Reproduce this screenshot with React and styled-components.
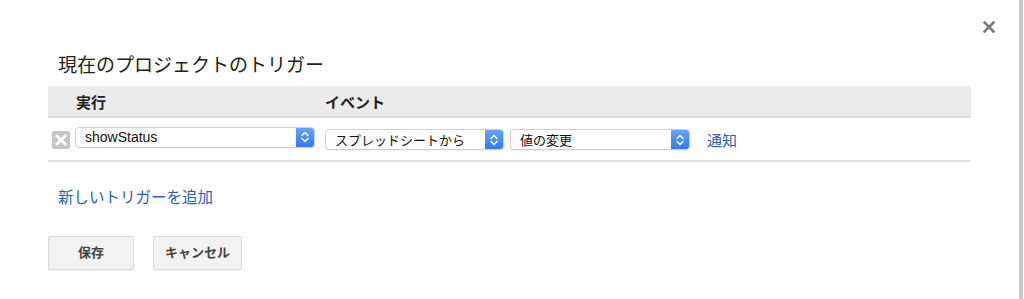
import React from 'react';
import styled, { createGlobalStyle } from 'styled-components';

const GlobalStyle = createGlobalStyle`
  html, body {
    margin: 0;
    padding: 0;
    background: #fff;
    font-family: "Liberation Sans", "Noto Sans CJK JP", sans-serif;
  }
`;

const jp = `"Noto Sans CJK JP", "Liberation Sans", sans-serif`;

const Page = styled.div`
  display: flex;
  height: 299px;
  overflow: hidden;
`;

const Dialog = styled.div`
  flex: 1;
  display: flex;
  flex-direction: column;
`;

const ScrollEdge = styled.div`
  width: 4px;
  margin-right: 1px;
  background: #c9c9c9;
`;

const CloseBar = styled.div`
  height: 53px;
  box-sizing: border-box;
  padding: 21px 24px 0 0;
  display: flex;
  justify-content: flex-end;
  align-items: flex-start;
`;

const Body = styled.div`
  padding: 0 48px;
`;

const Title = styled.h2`
  margin: 0;
  padding-left: 10px;
  height: 22px;
  line-height: 22px;
  font-family: ${jp};
  font-size: 19px;
  font-weight: 400;
  color: #222;
`;

const HeaderRow = styled.div`
  margin-top: 11px;
  height: 30px;
  display: flex;
  align-items: center;
  background: #ebebeb;
  border-bottom: 2px solid #dcdcdc;
`;

const HeaderCell = styled.div`
  width: ${p => p.width || 'auto'};
  padding-left: ${p => p.indent || 0}px;
  box-sizing: border-box;
  font-family: ${jp};
  font-size: 15px;
  font-weight: 700;
  color: #222;
`;

const TriggerRow = styled.div`
  height: 42px;
  display: flex;
  align-items: center;
  padding-left: 4px;
  border-bottom: 2px solid #e0e0e0;
`;

const RemoveBox = styled.div`
  width: 18px;
  height: 18px;
  border-radius: 2px;
  background: #c6c6c6;
  display: flex;
  align-items: center;
  justify-content: center;
  margin-top: 1px;
`;

const Select = styled.div`
  width: ${p => p.width}px;
  height: 21px;
  margin-left: ${p => p.gap}px;
  margin-top: ${p => p.shift || 0}px;
  box-sizing: border-box;
  display: flex;
  border: 1px solid #cfcfcf;
  border-radius: 4px;
  background: #fff;
  box-shadow: 0 1px 1px rgba(0, 0, 0, 0.06);
  overflow: hidden;
`;

const SelectText = styled.div`
  flex: 1;
  padding-left: ${p => p.pad || 9}px;
  line-height: 19px;
  font-family: ${p => (p.latin ? `"Liberation Sans", sans-serif` : jp)};
  font-size: ${p => (p.latin ? 14 : 13)}px;
  color: #111;
  white-space: nowrap;
`;

const Arrow = styled.div`
  width: 18px;
  background: linear-gradient(#64a5fb, #2f7cf2);
  display: flex;
  align-items: center;
  justify-content: center;
`;

const Link = styled.a`
  font-family: ${jp};
  font-size: ${p => p.size || 15}px;
  color: #2a5fbf;
  text-decoration: none;
  cursor: pointer;
  margin-left: ${p => p.gap || 0}px;
`;

const AddLine = styled.div`
  margin-top: 24px;
  padding-left: 10px;
  line-height: 20px;
`;

const Buttons = styled.div`
  margin-top: 28px;
  display: flex;
  gap: 19px;
`;

const Button = styled.button`
  min-width: 86px;
  height: 34px;
  padding: 0 11px 3px;
  box-sizing: border-box;
  border: 1px solid #dadada;
  border-radius: 2px;
  background: #f2f2f2;
  box-shadow: 0 1px 1px rgba(0, 0, 0, 0.05);
  font-family: ${jp};
  font-size: 13px;
  line-height: 1;
  font-weight: 700;
  color: #444;
`;

function Chevrons() {
  return (
    <svg width="10" height="14" viewBox="0 0 10 14">
      <path d="M2 5.5 L5 2.5 L8 5.5 M2 8.5 L5 11.5 L8 8.5" fill="none" stroke="#fff" strokeWidth="1.5" strokeLinecap="round" strokeLinejoin="round" />
    </svg>
  );
}

function Dropdown({ width, gap, shift, latin, children }) {
  return (
    <Select width={width} gap={gap} shift={shift}>
      <SelectText latin={latin}>{children}</SelectText>
      <Arrow><Chevrons /></Arrow>
    </Select>
  );
}

export default function App() {
  return (
    <>
      <GlobalStyle />
      <Page>
        <Dialog>
          <CloseBar>
            <svg width="12" height="12" viewBox="0 0 12 12">
              <path d="M1.5 1.5 L10.5 10.5 M10.5 1.5 L1.5 10.5" stroke="#7a7a7a" strokeWidth="2.6" strokeLinecap="square" />
            </svg>
          </CloseBar>
          <Body>
            <Title>現在のプロジェクトのトリガー</Title>
            <HeaderRow>
              <HeaderCell width="277px" indent={28}>実行</HeaderCell>
              <HeaderCell>イベント</HeaderCell>
            </HeaderRow>
            <TriggerRow>
              <RemoveBox>
                <svg width="12" height="12" viewBox="0 0 12 12">
                  <path d="M2 2 L10 10 M10 2 L2 10" stroke="#fff" strokeWidth="2.8" strokeLinecap="square" />
                </svg>
              </RemoveBox>
              <Dropdown width={240} gap={5} shift={-4} latin>showStatus</Dropdown>
              <Dropdown width={179} gap={10} shift={1}>スプレッドシートから</Dropdown>
              <Dropdown width={180} gap={6} shift={1}>値の変更</Dropdown>
              <Link gap={17}>通知</Link>
            </TriggerRow>
            <AddLine>
              <Link size={15.5}>新しいトリガーを追加</Link>
            </AddLine>
            <Buttons>
              <Button>保存</Button>
              <Button>キャンセル</Button>
            </Buttons>
          </Body>
        </Dialog>
        <ScrollEdge />
      </Page>
    </>
  );
}
